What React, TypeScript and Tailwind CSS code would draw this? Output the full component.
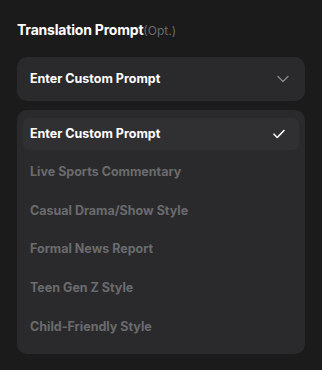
import React from "react";

const options = [
  "Enter Custom Prompt",
  "Live Sports Commentary",
  "Casual Drama/Show Style",
  "Formal News Report",
  "Teen Gen Z Style",
  "Child-Friendly Style",
];

export default function App() {
  const selected = 0;
  return (
    <div
      className="w-[322px] h-[370px] bg-[#1b1b1b] px-[17px] pt-[21px]"
      style={{ fontFamily: "Inter, 'Noto Sans', sans-serif" }}
    >
      <div className="flex items-baseline h-[18px]">
        <span className="text-[14px] font-bold text-white leading-[18px] tracking-[-0.2px]">
          Translation Prompt
        </span>
        <span className="text-[12px] text-[#6a6a6a] leading-[18px]">(Opt.)</span>
      </div>

      <div className="mt-[18px] h-[44px] rounded-[10px] bg-[#2a2a2c] flex items-center justify-between pl-[13px] pr-[16px]">
        <span className="text-[12.5px] font-bold text-white">Enter Custom Prompt</span>
        <svg width="12" height="8" viewBox="0 0 12 8" fill="none">
          <path d="M1 1.5l5 5 5-5" stroke="#8a8a8c" strokeWidth="1.3" strokeLinecap="round" strokeLinejoin="round" />
        </svg>
      </div>

      <div className="mt-[9px] rounded-[10px] bg-[#2a2a2c] px-[6px] pt-[8px] pb-[11px] flex flex-col gap-[6.6px]">
        {options.map((opt, i) => (
          <div
            key={opt}
            className={
              i === selected
                ? "h-8 rounded-[6px] bg-[#303033] flex items-center justify-between pl-[7px] pr-[14px]"
                : "h-8 rounded-[6px] flex items-center justify-between pl-[7px] pr-[14px]"
            }
          >
            <span
              className={
                i === selected
                  ? "text-[12.5px] font-bold text-white"
                  : "text-[12.5px] font-bold text-[#6b6b6d]"
              }
            >
              {opt}
            </span>
            {i === selected && (
              <svg width="12" height="10" viewBox="0 0 12 10" fill="none">
                <path d="M1 5.2l3.3 3.3L11 1.5" stroke="#ffffff" strokeWidth="1.6" strokeLinecap="round" strokeLinejoin="round" />
              </svg>
            )}
          </div>
        ))}
      </div>
    </div>
  );
}
